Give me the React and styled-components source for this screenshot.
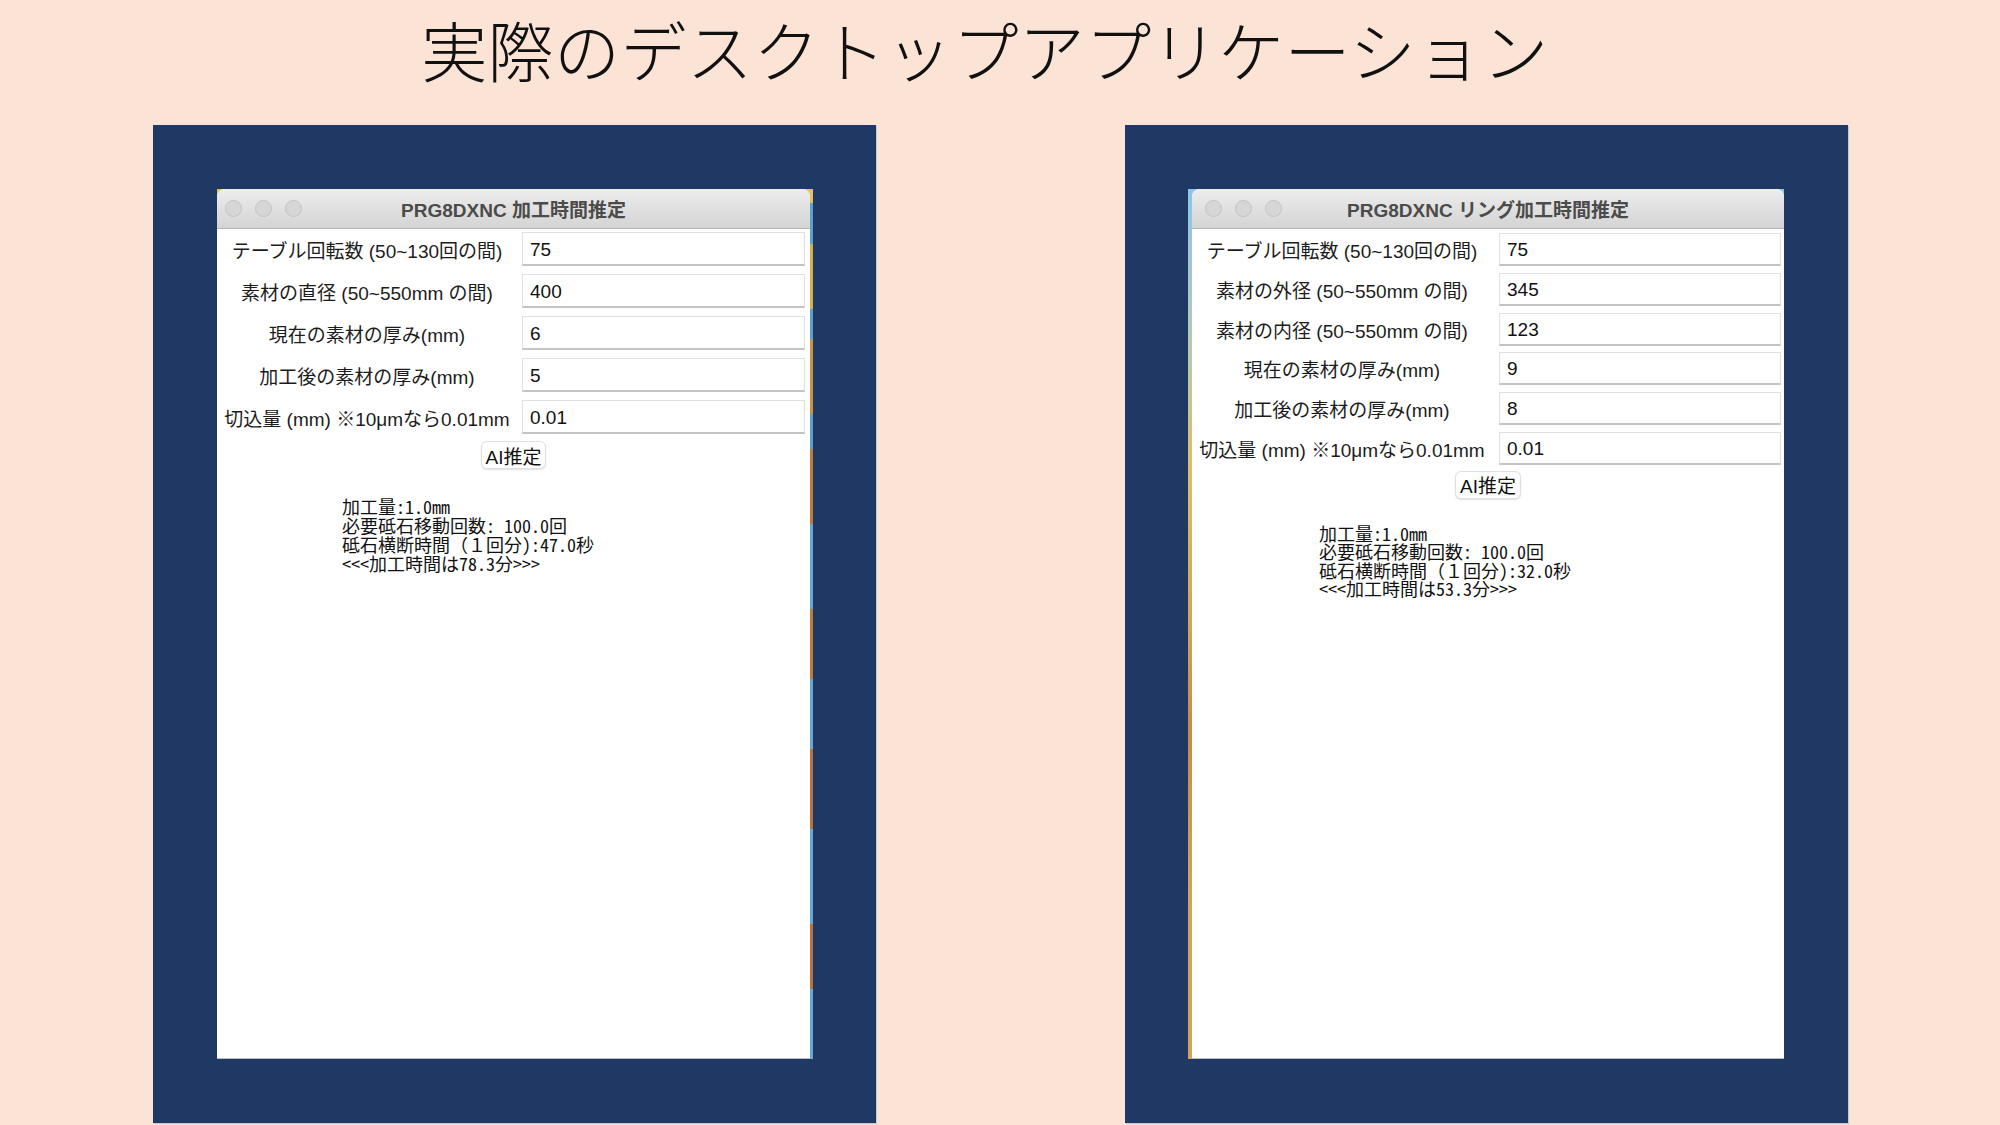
import React from "react";
import styled, { createGlobalStyle } from "styled-components";

const GlobalStyle = createGlobalStyle`
  html, body {
    margin: 0;
    padding: 0;
    background: #fbe3d6;
  }
  body {
    font-family: "Liberation Sans", "Noto Sans CJK JP", sans-serif;
  }
`;

const Page = styled.div`
  width: 2000px;
  height: 1125px;
  overflow: hidden;
  display: flex;
  flex-direction: column;
  background: #fbe3d6;
`;

const Heading = styled.h1`
  margin: 0;
  height: 125px;
  box-sizing: border-box;
  padding-bottom: 30px;
  padding-right: 30px;
  display: flex;
  align-items: center;
  justify-content: center;
  font-family: "Noto Sans CJK JP", sans-serif;
  font-weight: 300;
  font-size: 66px;
  letter-spacing: 0.4px;
  color: #111;
`;

const PanelRow = styled.div`
  display: flex;
  gap: 249px;
  padding-left: 153px;
`;

const Panel = styled.section`
  width: 723px;
  height: 998px;
  box-sizing: border-box;
  padding-top: 64px;
  padding-left: ${(p) => p.$padLeft}px;
  background: #203864;
  box-shadow: 1px 1px 0 #c5c8ce;
`;

const Frame = styled.div`
  width: 596px;
  height: 870px;
  box-sizing: border-box;
  display: flex;
  padding-left: ${(p) => p.$stripLeft}px;
  padding-right: ${(p) => p.$stripRight}px;
  background: ${(p) => p.$wall};
`;

const Window = styled.div`
  flex: 1;
  min-width: 0;
  background: #ffffff;
  border-radius: 8px 8px 0 0;
  overflow: hidden;
  display: flex;
  flex-direction: column;
  border-bottom: 1px solid #b9bcc0;
`;

const TitleBar = styled.div`
  height: 40px;
  flex-shrink: 0;
  box-sizing: border-box;
  background: linear-gradient(#ededed, #d4d4d4);
  border-bottom: 1px solid #b3b3b3;
  display: grid;
  grid-template-columns: 1fr auto 1fr;
  align-items: center;
`;

const Lights = styled.div`
  display: flex;
  gap: 13px;
  padding-left: ${(p) => p.$pad}px;
`;

const Light = styled.span`
  width: 17px;
  height: 17px;
  box-sizing: border-box;
  border-radius: 50%;
  background: #d6d6d6;
  border: 1px solid #c3c3c3;
`;

const WindowTitle = styled.div`
  font-size: 19px;
  font-weight: 700;
  color: #4b4b4b;
  white-space: nowrap;
`;

const Form = styled.div`
  display: grid;
  grid-template-columns: ${(p) => p.$labelW}px ${(p) => p.$inputW}px;
  grid-auto-rows: ${(p) => p.$rowH}px;
  column-gap: ${(p) => p.$colGap}px;
  row-gap: ${(p) => p.$rowGap}px;
  padding-top: ${(p) => p.$padTop}px;
`;

const Label = styled.label`
  display: flex;
  align-items: center;
  justify-content: center;
  font-size: 19px;
  color: #1c1c1c;
  white-space: pre;
`;

const Field = styled.input`
  box-sizing: border-box;
  width: 100%;
  height: 100%;
  margin: 0;
  padding: 2px 0 0 7px;
  border: 1px solid #e1e1e1;
  border-bottom: 2px solid #c4c4c4;
  background: #ffffff;
  font-family: "Liberation Sans", "Noto Sans CJK JP", sans-serif;
  font-size: 19px;
  color: #111;
  outline: none;
`;

const ButtonRow = styled.div`
  display: flex;
  justify-content: center;
  padding-top: ${(p) => p.$gap}px;
`;

const Button = styled.button`
  height: 28px;
  box-sizing: border-box;
  padding: 0 4px;
  border: 1px solid #e0e0e0;
  border-radius: 6px;
  background: #ffffff;
  box-shadow: 0 1px 1.5px rgba(0, 0, 0, 0.12);
  font-family: "Liberation Sans", "Noto Sans CJK JP", sans-serif;
  font-size: 19px;
  color: #111;
  display: flex;
  align-items: center;
`;

const Result = styled.pre`
  margin: ${(p) => p.$top}px 0 0 ${(p) => p.$left}px;
  font-family: "Noto Sans Mono CJK JP", "DejaVu Sans Mono", "Noto Sans CJK JP", monospace;
  font-size: 18px;
  line-height: ${(p) => p.$lh}px;
  color: #111;
`;

const wallLeft = `linear-gradient(180deg,
  #e2c25a 0px, #e2c25a 14px,
  #5f9fcd 14px, #5f9fcd 55px,
  #d4b14e 55px, #d4b14e 120px,
  #5f9fcd 120px, #5f9fcd 150px,
  #c8963f 150px, #c8963f 225px,
  #5f9fcd 225px, #5f9fcd 260px,
  #c07a36 260px, #c07a36 335px,
  #6aa6d2 335px, #6aa6d2 420px,
  #bf7a3a 420px, #bf7a3a 490px,
  #6aa6d2 490px, #6aa6d2 560px,
  #b9733a 560px, #b9733a 640px,
  #6aa6d2 640px, #6aa6d2 735px,
  #b9733a 735px, #b9733a 800px,
  #6aa6d2 800px, #6aa6d2 870px)`;

const wallRight = `linear-gradient(180deg,
  #8fc4e8 0%, #b7c9b0 18%, #d8c068 32%, #d2a456 50%,
  #c98a45 62%, #cfa257 80%, #d2a455 100%)`;

const windows = [
  {
    key: "a",
    padLeft: 64,
    stripLeft: 0,
    stripRight: 3,
    wall: wallLeft,
    lightsPad: 8,
    title: "PRG8DXNC 加工時間推定",
    form: { labelW: 300, inputW: 283, colGap: 5, rowH: 34, rowGap: 8, padTop: 3 },
    btnGap: 7,
    resTop: 28,
    resLeft: 125,
    resLh: 19.1,
    rows: [
      ["テーブル回転数 (50~130回の間)", "75"],
      ["素材の直径 (50~550mm の間)", "400"],
      ["現在の素材の厚み(mm)", "6"],
      ["加工後の素材の厚み(mm)", "5"],
      ["切込量 (mm) ※10μmなら0.01mm", "0.01"],
    ],
    result:
      "加工量:1.0mm\n必要砥石移動回数: 100.0回\n砥石横断時間（１回分):47.0秒\n<<<加工時間は78.3分>>>",
  },
  {
    key: "b",
    padLeft: 63,
    stripLeft: 4,
    stripRight: 0,
    wall: wallRight,
    lightsPad: 13,
    title: "PRG8DXNC リング加工時間推定",
    form: { labelW: 300, inputW: 282, colGap: 7, rowH: 33, rowGap: 6.8, padTop: 4 },
    btnGap: 6,
    resTop: 25,
    resLeft: 127,
    resLh: 18.3,
    rows: [
      ["テーブル回転数 (50~130回の間)", "75"],
      ["素材の外径 (50~550mm の間)", "345"],
      ["素材の内径 (50~550mm の間)", "123"],
      ["現在の素材の厚み(mm)", "9"],
      ["加工後の素材の厚み(mm)", "8"],
      ["切込量 (mm) ※10μmなら0.01mm", "0.01"],
    ],
    result:
      "加工量:1.0mm\n必要砥石移動回数: 100.0回\n砥石横断時間（１回分):32.0秒\n<<<加工時間は53.3分>>>",
  },
];

function AppWindow({ w }) {
  return (
    <Panel $padLeft={w.padLeft}>
      <Frame $stripLeft={w.stripLeft} $stripRight={w.stripRight} $wall={w.wall}>
        <Window>
          <TitleBar>
            <Lights $pad={w.lightsPad}>
              <Light />
              <Light />
              <Light />
            </Lights>
            <WindowTitle>{w.title}</WindowTitle>
            <div />
          </TitleBar>
          <Form
            $labelW={w.form.labelW}
            $inputW={w.form.inputW}
            $colGap={w.form.colGap}
            $rowH={w.form.rowH}
            $rowGap={w.form.rowGap}
            $padTop={w.form.padTop}
          >
            {w.rows.map(([label, value]) => (
              <React.Fragment key={label}>
                <Label>{label}</Label>
                <Field value={value} readOnly />
              </React.Fragment>
            ))}
          </Form>
          <ButtonRow $gap={w.btnGap}>
            <Button type="button">AI推定</Button>
          </ButtonRow>
          <Result $top={w.resTop} $left={w.resLeft} $lh={w.resLh}>
            {w.result}
          </Result>
        </Window>
      </Frame>
    </Panel>
  );
}

export default function App() {
  return (
    <Page>
      <GlobalStyle />
      <Heading>実際のデスクトップアプリケーション</Heading>
      <PanelRow>
        {windows.map((w) => (
          <AppWindow key={w.key} w={w} />
        ))}
      </PanelRow>
    </Page>
  );
}
